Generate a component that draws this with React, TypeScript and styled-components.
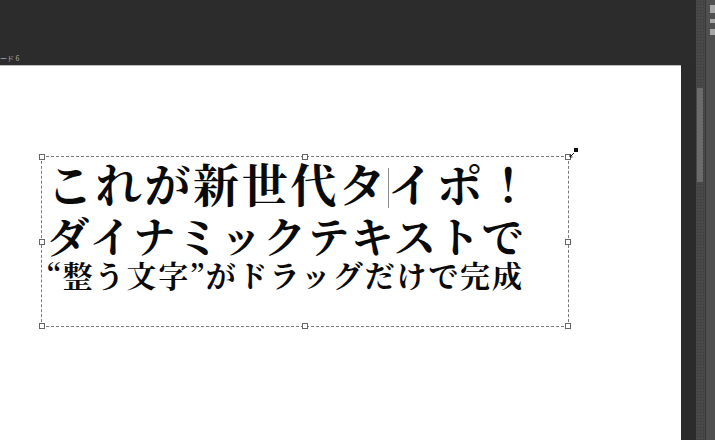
import * as React from 'react';
import styled, { createGlobalStyle } from 'styled-components';

const GlobalStyle = createGlobalStyle`
  html, body {
    margin: 0;
    padding: 0;
    background: #2b2b2b;
    overflow: hidden;
  }
  #root {
    width: 715px;
    height: 440px;
  }
`;

const Shell = styled.div`
  display: flex;
  width: 715px;
  height: 440px;
  background: #2b2b2b;
`;

const Workspace = styled.div`
  display: flex;
  flex-direction: column;
  width: 696px;
`;

const TopBar = styled.div`
  height: 65px;
  display: flex;
  align-items: flex-end;
  background: #2c2c2c;
`;

const TabLabel = styled.span`
  font-family: 'Noto Sans CJK JP', sans-serif;
  font-size: 7px;
  line-height: 9px;
  color: #a8a8a8;
  padding: 0 0 2px 0;
`;

const CanvasRow = styled.div`
  flex: 1;
  display: flex;
`;

const Canvas = styled.div`
  width: 681px;
  background: #ffffff;
  border-top: 1px solid #bcbcbc;
  box-sizing: border-box;
  padding: 90px 0 0 41px;
`;

const Gutter = styled.div`
  flex: 1;
  background: #2b2b2b;
`;

const ScrollTrack = styled.div`
  width: 9px;
  background: #484848;
  background-image: radial-gradient(#3c3c3c 0.6px, transparent 0.7px);
  background-size: 3px 3px;
  padding-top: 88px;
  box-sizing: border-box;
`;

const ScrollThumb = styled.div`
  width: 6px;
  height: 94px;
  margin-left: 1px;
  background: #6a6a6a;
`;

const SidePanel = styled.div`
  width: 10px;
  display: flex;
  flex-direction: column;
  gap: 6px;
  padding-top: 5px;
  box-sizing: border-box;
  background: #4f4f4f;
  border-left: 1px solid #3a3a3a;
`;

const PanelIcon = styled.div<{ $h: number }>`
  width: 5px;
  height: ${p => p.$h}px;
  margin-left: 4px;
  background: #bdbdbd;
  opacity: 0.8;
`;

const Frame = styled.div`
  position: relative;
  width: 528px;
  height: 171px;
  box-sizing: border-box;
  border: 1px dashed #7a7a7a;
  padding: 0 0 0 5px;
`;

const Handle = styled.span<{ $x: string; $y: string }>`
  position: absolute;
  left: ${p => p.$x};
  top: ${p => p.$y};
  width: 4px;
  height: 4px;
  margin: -3px 0 0 -3px;
  background: #fff;
  border: 1px solid #666;
`;

const RotateCursor = styled.svg`
  position: absolute;
  right: -11px;
  top: -9px;
`;

const Line = styled.div<{ $size: number; $lh: number; $ls: number; $gap: number }>`
  font-family: 'Noto Serif CJK JP', 'Noto Sans CJK JP', serif;
  font-weight: 700;
  font-size: ${p => p.$size}px;
  line-height: ${p => p.$lh}px;
  letter-spacing: ${p => p.$ls}px;
  margin-top: ${p => p.$gap}px;
  color: #0a0a0a;
  white-space: nowrap;
`;

const Caret = styled.span`
  display: inline-block;
  width: 1px;
  height: 40px;
  margin: 0 -1px 0 0;
  vertical-align: -6px;
  background: #8a8a8a;
`;

const handles: [string, string][] = [
  ['0%', '0%'], ['50%', '0%'], ['100%', '0%'],
  ['0%', '50%'], ['100%', '50%'],
  ['0%', '100%'], ['50%', '100%'], ['100%', '100%'],
];

export default function App() {
  return <Shell>
    <GlobalStyle />
    <Workspace>
      <TopBar>
        <TabLabel>ード 6</TabLabel>
      </TopBar>
      <CanvasRow>
        <Canvas>
          <Frame>
            {handles.map(([x, y]) => <Handle key={x + y} $x={x} $y={y} />)}
            <RotateCursor width="10" height="10" viewBox="0 0 10 10">
              <rect x="5" y="0" width="4" height="4" fill="#111" />
              <path d="M1 9 L5 5 M1 9 L1 6.5 M1 9 L3.5 9" stroke="#111" strokeWidth="1" fill="none" />
            </RotateCursor>
            <Line $size={46} $lh={48} $ls={2.7} $gap={1}>これが新世代タ<Caret />イポ！</Line>
            <Line $size={42} $lh={44} $ls={1.7} $gap={5}>ダイナミックテキストで</Line>
            <Line $size={30} $lh={32} $ls={1.85} $gap={1}>“整う文字”がドラッグだけで完成</Line>
          </Frame>
        </Canvas>
        <Gutter />
      </CanvasRow>
    </Workspace>
    <ScrollTrack>
      <ScrollThumb />
    </ScrollTrack>
    <SidePanel>
      <PanelIcon $h={8} />
      <PanelIcon $h={4} />
      <PanelIcon $h={6} />
    </SidePanel>
  </Shell>;
}
